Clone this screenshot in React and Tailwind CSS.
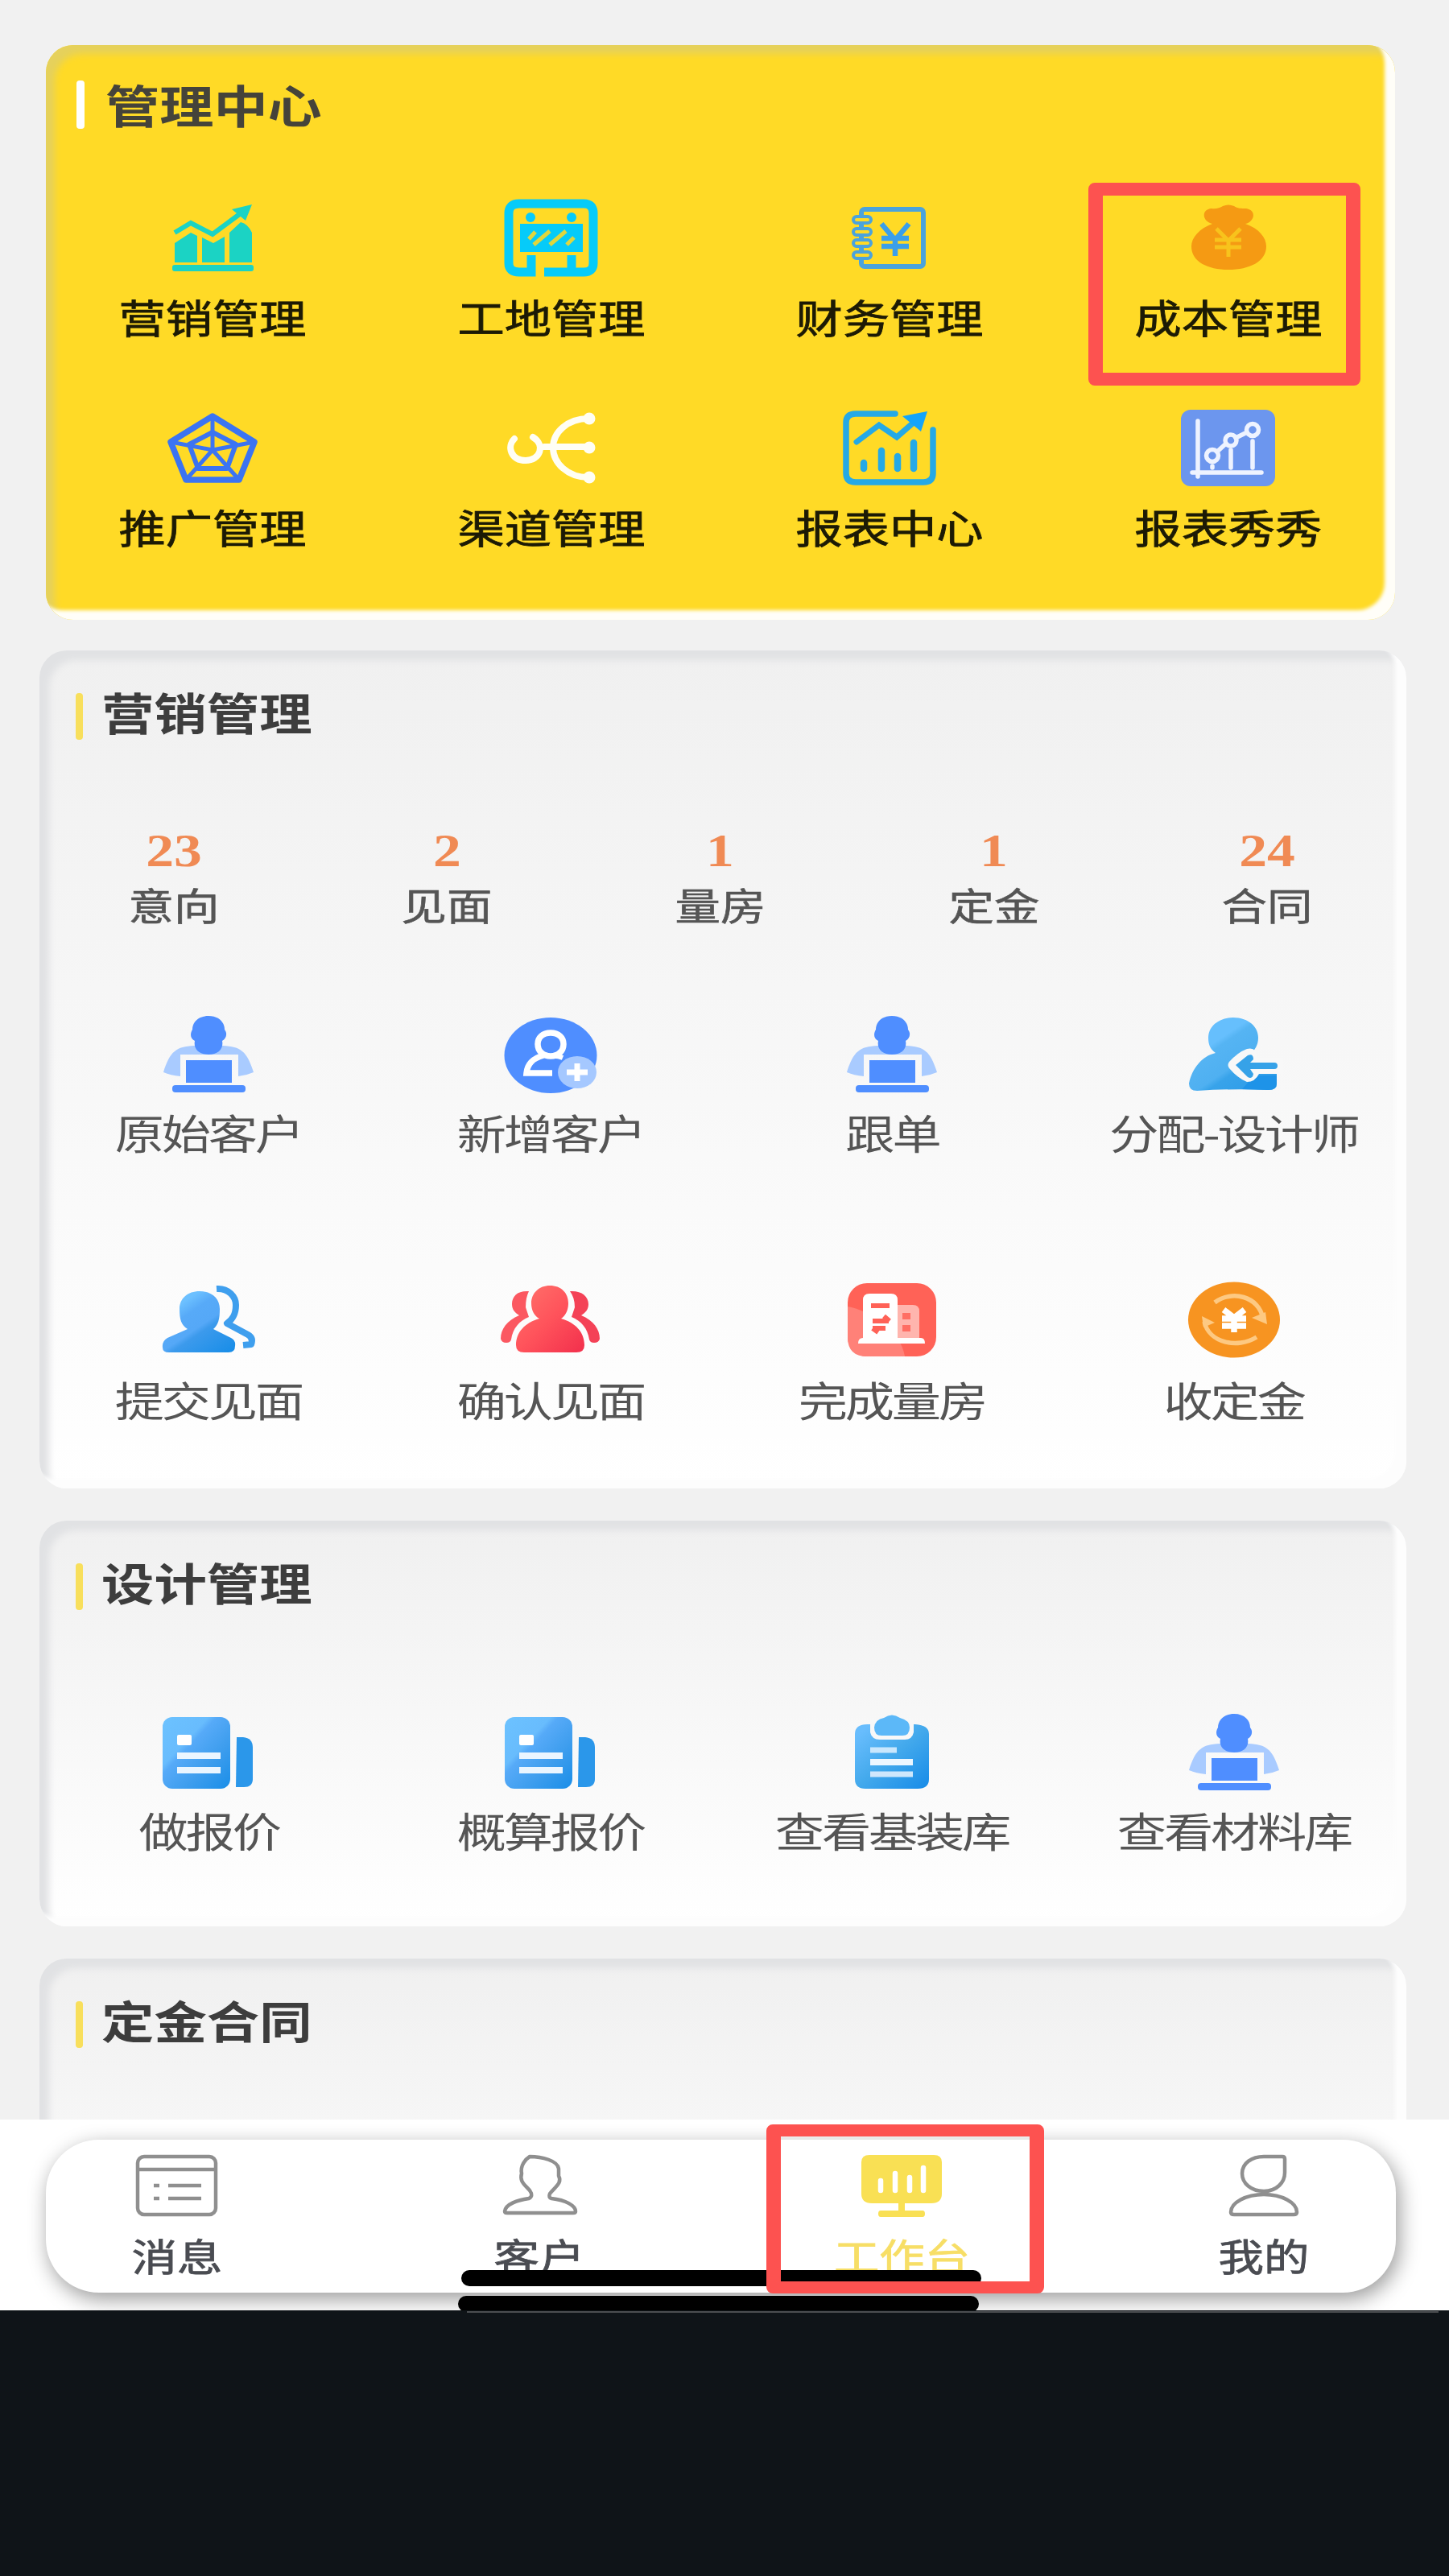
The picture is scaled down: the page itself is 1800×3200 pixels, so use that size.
import clsx from "clsx";

function Svg({ children, h = 96 }) {
  return (
    <svg
      width="120"
      height={h}
      viewBox={`0 0 120 ${h}`}
      fill="none"
      className="shrink-0 overflow-visible"
    >
      {children}
    </svg>
  );
}

function GrowthIcon() {
  return (
    <Svg>
      <g fill="#1bd3c4">
        <path d="M13 54 33 41 41 45V78H13ZM47 47 61 54 75 46V78H47ZM81 41 95 28Q104 30 109 41V78H81Z" />
        <rect x="10" y="81" width="101" height="8" rx="3" />
        <path d="M109 6 84 12 101 26Z" />
      </g>
      <path d="M13 41 33 29 60 43 95 17" stroke="#1bd3c4" strokeWidth="6" />
    </Svg>
  );
}

function SiteIcon() {
  return (
    <Svg>
      <path
        d="M35 69V90H20Q7 90 7 79V17Q7 5 20 5H100Q112 5 112 17V79Q112 90 100 90H51M85 69V89"
        stroke="#06cbf9"
        strokeWidth="11"
      />
      <g fill="#06cbf9">
        <circle cx="34" cy="22" r="6" />
        <circle cx="85" cy="22" r="6" />
        <rect x="21" y="30" width="78" height="35" />
      </g>
      <path
        d="M32 49 40 40M38 56 58 39M58 56 78 39M79 56 88 47"
        stroke="#dfd63e"
        strokeWidth="5"
      />
    </Svg>
  );
}

function FinanceIcon() {
  return (
    <Svg>
      <rect x="25" y="12" width="77" height="71" rx="4" stroke="#4ba3dc" strokeWidth="6" />
      {[25, 40, 54, 69].map((y) => (
        <rect key={y} x="15" y={y - 4} width="22" height="8" rx="4" fill="#ffda26" stroke="#4ba3dc" strokeWidth="4" />
      ))}
      <path d="M50 30 67 50 84 30M67 50V70M50 48H84M50 58H84" stroke="#3a9fea" strokeWidth="6.5" />
    </Svg>
  );
}

function BagIcon() {
  return (
    <Svg>
      <path
        d="M40 30C27 27 26 12 39 11C44 12 50 10 53 8Q60 5 67 8C71 11 76 11 82 11C95 13 93 27 81 30C98 36 107 47 107 58C107 77 86 87 60 87C34 87 14 77 14 58C14 47 24 36 40 30Z"
        fill="#f59a13"
      />
      <path d="M45 36 60 51 75 36M60 51V71M43 50H76M43 59H76" stroke="#f8c31c" strokeWidth="5" />
    </Svg>
  );
}

function RadarIcon() {
  return (
    <Svg>
      <g stroke="#3b74f2" strokeLinejoin="round">
        <path d="M60 8 112 40 93 87H27L8 40Z" strokeWidth="7.5" />
        <path d="M60 28 89 43 78 73H42L31 43Z" strokeWidth="6" />
        <path d="M60 8V50M112 40 60 50 93 87M27 87 60 50 8 40" strokeWidth="5" />
      </g>
    </Svg>
  );
}

function ChannelIcon() {
  return (
    <Svg>
      <path
        d="M14 36C4 46 10 63 28 63C46 63 53 44 37 34M51 46H106M106 11C80 11 62 28 62 47C62 66 80 84 106 84"
        stroke="#fffef4"
        strokeWidth="8"
        strokeLinecap="round"
      />
      <g fill="#fffef4">
        <circle cx="107" cy="11" r="7.5" />
        <circle cx="107" cy="47" r="7.5" />
        <circle cx="107" cy="84" r="7.5" />
      </g>
    </Svg>
  );
}

function ReportIcon() {
  return (
    <Svg>
      <g stroke="#25a9e6" strokeLinecap="round">
        <path d="M67 5H18Q6 5 6 16V79Q6 90 18 90H102Q114 90 114 79V25" strokeWidth="7.5" />
        <path d="M19 40 47 19 69 34 92 14" strokeWidth="7" />
        <path d="M28 66V73M50 51V73M70 58V73M90 41V73" strokeWidth="8.5" />
      </g>
      <path d="M107 2 76 8 99 27Z" fill="#14a4fb" />
    </Svg>
  );
}

function ScatterIcon() {
  return (
    <Svg>
      <rect x="1" y="0" width="117" height="95" rx="12" fill="#6c96ee" />
      <g stroke="#eef3ff" strokeWidth="5.5" strokeLinecap="round">
        <path d="M22 14V83M15 78H101M46 52 57 42M69 35 83 28" />
        <circle cx="40" cy="57" r="7.5" />
        <circle cx="63" cy="38" r="7" />
        <circle cx="90" cy="25" r="7.5" />
        <path d="M40 70V72M63 50V72M90 39V72" />
      </g>
    </Svg>
  );
}

function WorkerIcon() {
  return (
    <Svg h={98}>
      <path d="M42 39C20 40 12 46 4 72Q13 76 25 77V50H97V77Q107 76 116 72C108 46 100 40 78 39Z" fill="#a9cbff" />
      <path
        d="M60 2C73 2 80 10 80 19C84 24 82 30 77 33C79 43 72 50 60 50C48 50 41 43 43 33C37 30 37 24 40 19C40 10 47 2 60 2Z"
        fill="#4f8eff"
      />
      <rect x="32" y="57" width="57" height="28" fill="#4f8eff" />
      <rect x="15" y="88" width="91" height="9" rx="4" fill="#4f8eff" />
    </Svg>
  );
}

function AddUserIcon() {
  return (
    <Svg h={98}>
      <ellipse cx="60" cy="51" rx="57.5" ry="47" fill="#4f8eff" />
      <path
        d="M60 23C70 23 76 29 76 37C76 46 69 52 60 52C51 52 44 46 44 37C44 29 50 23 60 23ZM51 51C37 55 31 62 30 73H62"
        stroke="#fff"
        strokeWidth="7.5"
      />
      <path d="M60 52Q68 51 75 54" stroke="#fff" strokeWidth="6" />
      <ellipse cx="93" cy="72" rx="24" ry="20" fill="#a5c8ff" />
      <path d="M80 72H106M93 61V83" stroke="#fff" strokeWidth="7" />
    </Svg>
  );
}

function AssignIcon() {
  return (
    <Svg h={98}>
      <defs>
        <linearGradient id="assign" x1="0.1" y1="0" x2="0.9" y2="1">
          <stop offset="0.3" stopColor="#66bffd" />
          <stop offset="0.36" stopColor="#55b4f3" />
          <stop offset="0.6" stopColor="#4fb0f1" />
          <stop offset="0.66" stopColor="#38a3ea" />
          <stop offset="1" stopColor="#2b9be8" />
        </linearGradient>
      </defs>
      <path
        d="M59 4C77 4 90 15 90 29C90 38 86 45 79 50L113 74V86Q113 94 103 94Q60 92 14 95Q4 95 4 86C8 67 20 52 37 48C30 43 28 37 28 29C28 15 41 4 59 4Z"
        fill="url(#assign)"
      />
      <path d="M85 76H113V86Q113 94 103 94L70 93Z" fill="#1e93e8" />
      <path
        d="M54 59Q65 47 76 43Q88 40 89 54H121V74H91Q86 84 76 84Q64 79 54 67Q51 63 54 59Z"
        fill="#f8f8f8"
      />
      <path
        d="M62 63 77 51Q84 48 84 56L80 60H110Q114 60 114 64Q114 68 110 68H80L84 74Q83 81 77 78Z"
        fill="#36a2e8"
      />
    </Svg>
  );
}

function SubmitIcon() {
  return (
    <Svg h={98}>
      <defs>
        <linearGradient id="submit" x1="0.1" y1="0" x2="0.9" y2="1">
          <stop offset="0.2" stopColor="#6cc0ff" />
          <stop offset="0.35" stopColor="#57aaf8" />
          <stop offset="0.55" stopColor="#55a8f7" />
          <stop offset="0.62" stopColor="#3c9aec" />
          <stop offset="1" stopColor="#1a8ee8" />
        </linearGradient>
      </defs>
      <path
        d="M49 12C64 12 74 21 74 34C74 47 72 54 66 59L88 70Q94 73 93 80Q93 88 85 88H11Q3 88 3 82Q2 74 9 70L34 59C26 54 24 47 24 34C24 21 34 12 49 12Z"
        fill="url(#submit)"
      />
      <path
        d="M70 9C85 8 94 19 94 29C94 41 90 47 83 52L109 66Q116 70 113 78L103 79"
        stroke="#3f9fee"
        strokeWidth="8"
        strokeLinejoin="round"
      />
    </Svg>
  );
}

function ConfirmIcon() {
  return (
    <Svg h={98}>
      <defs>
        <linearGradient id="confirm" x1="0" y1="0" x2="1" y2="1">
          <stop offset="0" stopColor="#ff746c" />
          <stop offset="0.5" stopColor="#ff535b" />
          <stop offset="1" stopColor="#f22f4c" />
        </linearGradient>
      </defs>
      <path d="M33 12C19 11 12 18 12 28C12 35 16 39 21 42C6 48 -2 59 -2 71Q-1 76 5 76Q10 76 11 72C13 58 21 49 33 44L29 32Q29 20 33 12Z" fill="#fb5861" />
      <path d="M84 12C98 11 107 18 107 28C107 35 103 39 98 42C113 48 121 59 121 71Q120 76 114 76Q109 76 108 72C106 58 98 49 86 44L90 32Q90 20 84 12Z" fill="#f44257" />
      <path
        d="M59 5C73 5 82 14 82 27C82 36 78 43 73 46C91 51 102 63 102 79Q102 88 92 88H27Q17 88 17 79C17 63 28 51 46 46C40 43 36 36 36 27C36 14 46 5 59 5Z"
        fill="url(#confirm)"
      />
    </Svg>
  );
}

function BuildingIcon() {
  return (
    <Svg h={98}>
      <rect x="5" y="2" width="110" height="91" rx="24" fill="#ff6257" />
      <path d="M5 31C30 35 71 60 76 93H29Q5 93 5 69Z" fill="#ff8178" />
      <path d="M66 29H86Q94 29 94 37V71H66Z" fill="#ffb5ae" />
      <path d="M32 15H59Q67 15 67 23V70H96Q101 70 101 77H18Q18 70 24 70V23Q24 15 32 15Z" fill="#fff" />
      <path d="M34 30H57M36 49H56M36 58H52M50 43 57 49M36 58 43 63" stroke="#ff6257" strokeWidth="6" />
      <path d="M73 43H83M73 58H83" stroke="#ff6e64" strokeWidth="8" />
    </Svg>
  );
}

function DepositIcon() {
  return (
    <Svg h={98}>
      <ellipse cx="60" cy="47.5" rx="57" ry="47" fill="#f79421" />
      <path d="M36 26C57 10 91 18 96 46M88 69C64 84 29 76 23 50" stroke="#fdc982" strokeWidth="5.5" />
      <path d="M82 45 101 53 99 38ZM20 43 36 51 22 57Z" fill="#fdc982" />
      <path d="M47 35 60 45 73 35M60 44V63M45 46H75M45 55H75" stroke="#fff" strokeWidth="7.5" />
    </Svg>
  );
}

function QuoteIcon() {
  return (
    <Svg h={98}>
      <defs>
        <linearGradient id="quote" x1="0" y1="0" x2="1" y2="1">
          <stop offset="0" stopColor="#6cc2ff" />
          <stop offset="0.34" stopColor="#68bcfd" />
          <stop offset="0.4" stopColor="#56aaf8" />
          <stop offset="0.65" stopColor="#3f9eee" />
          <stop offset="1" stopColor="#1a8ee8" />
        </linearGradient>
      </defs>
      <rect x="3" y="6" width="84" height="89" rx="12" fill="url(#quote)" />
      <path d="M95 31H103Q115 32 115 44V83Q115 93 104 93H94Z" fill="#2b97ea" />
      <rect x="21" y="28" width="18" height="13" rx="2" fill="#fff" />
      <path d="M21 54H75M21 72H75" stroke="#eaf5ff" strokeWidth="8" />
    </Svg>
  );
}

function ClipboardIcon() {
  return (
    <Svg h={98}>
      <defs>
        <linearGradient id="clip" x1="0" y1="0" x2="1" y2="1">
          <stop offset="0.1" stopColor="#68bdfd" />
          <stop offset="0.5" stopColor="#43a9ec" />
          <stop offset="1" stopColor="#178be8" />
        </linearGradient>
      </defs>
      <path d="M32 15Q14 14 14 27V83Q14 95 27 95H92Q106 95 106 83V27Q106 16 89 15Z" fill="url(#clip)" />
      <path d="M33 10H87V25Q85 34 76 34H45Q35 34 33 25Z" fill="#f8f8f8" />
      <path d="M50 7Q60 0 70 7Q82 10 82 19Q82 29 73 29H47Q38 29 38 19Q39 9 50 7Z" fill="#5cb8f8" />
      <path d="M33 47H66" stroke="#c9e7fd" strokeWidth="7" />
      <path d="M33 62H86" stroke="#edf7ff" strokeWidth="8" />
      <path d="M33 77H86" stroke="#cfe7fc" strokeWidth="7" />
    </Svg>
  );
}

function MessageIcon() {
  return (
    <Svg h={80}>
      <g stroke="#8f8f8f" strokeWidth="4.5">
        <rect x="11" y="3" width="97" height="72" rx="8" />
        <path d="M11 19H108M49 39H90M49 55H90M31 39H38M31 55H38" />
      </g>
    </Svg>
  );
}

function CustomerIcon() {
  return (
    <Svg h={80}>
      <path
        d="M48 3C63 3 83 8 84 18V27C89 36 79 41 73 49Q71 54 75 55C93 57 105 64 105 71Q105 73 102 73H20Q17 73 17 71C18 62 33 57 47 55Q53 52 48 45C42 38 35 34 38 24C36 14 43 6 48 3Z"
        stroke="#8f8f8f"
        strokeWidth="4.5"
        strokeLinejoin="round"
      />
    </Svg>
  );
}

function WorkbenchIcon() {
  return (
    <Svg h={80}>
      <path
        d="M20 1H100Q110 1 110 10V49Q110 61 97 61H64V70H86Q89 70 89 74Q89 78 86 78H34Q31 78 31 74Q31 70 34 70H56V61H23Q10 61 10 49V10Q10 1 20 1Z"
        fill="#f9e054"
      />
      <path d="M34 33V45M52 24V45M70 29V45M87 17V45" stroke="#fff" strokeWidth="6.5" strokeLinecap="round" />
    </Svg>
  );
}

function MineIcon() {
  return (
    <Svg h={80}>
      <g stroke="#8f8f8f" strokeWidth="4.5">
        <path d="M60 3H83Q86 3 86 6V23C86 35 76 46 60 46C44 46 33 36 33 24C33 11 45 3 60 3Z" />
        <path d="M60 50C82 50 101 60 101 72Q101 75 97 75H23Q19 75 19 72C19 60 38 50 60 50Z" />
      </g>
    </Svg>
  );
}

const CENTER = [
  { name: "营销管理", icon: GrowthIcon },
  { name: "工地管理", icon: SiteIcon },
  { name: "财务管理", icon: FinanceIcon },
  { name: "成本管理", icon: BagIcon, marked: true },
  { name: "推广管理", icon: RadarIcon },
  { name: "渠道管理", icon: ChannelIcon },
  { name: "报表中心", icon: ReportIcon },
  { name: "报表秀秀", icon: ScatterIcon },
];

const STATS = [
  { name: "意向", value: 23 },
  { name: "见面", value: 2 },
  { name: "量房", value: 1 },
  { name: "定金", value: 1 },
  { name: "合同", value: 24 },
];

const MARKETING = [
  { name: "原始客户", icon: WorkerIcon },
  { name: "新增客户", icon: AddUserIcon },
  { name: "跟单", icon: WorkerIcon },
  { name: "分配-设计师", icon: AssignIcon },
  { name: "提交见面", icon: SubmitIcon },
  { name: "确认见面", icon: ConfirmIcon },
  { name: "完成量房", icon: BuildingIcon },
  { name: "收定金", icon: DepositIcon },
];

const DESIGN = [
  { name: "做报价", icon: QuoteIcon },
  { name: "概算报价", icon: QuoteIcon },
  { name: "查看基装库", icon: ClipboardIcon },
  { name: "查看材料库", icon: WorkerIcon },
];

const TABS = [
  { name: "消息", icon: MessageIcon },
  { name: "客户", icon: CustomerIcon },
  { name: "工作台", icon: WorkbenchIcon, active: true },
  { name: "我的", icon: MineIcon },
];

function Card({ title, className, children }) {
  return (
    <section
      className={clsx(
        "mr-[53px] ml-[49px] shrink-0 rounded-[34px] pt-[53px]",
        "bg-linear-to-b from-[#f0f0f0] to-white",
        "shadow-[inset_-14px_-12px_5px_#fdfdfd,inset_12px_12px_9px_#e1e2e4]",
        className,
      )}
    >
      <div className="flex h-[58px] items-start">
        <span className="ml-[45px] h-[58px] w-[9px] rounded-sm bg-[#f8df5c]" />
        <h2 className="ml-[23px] origin-left scale-x-[1.2] text-[54.5px] leading-[46px] font-bold text-[#3d3d3d]">
          {title}
        </h2>
      </div>
      {children}
    </section>
  );
}

function IconGrid({ items, className }) {
  return (
    <div className={clsx("mr-[2px] -ml-[2px] grid grid-cols-4 gap-y-[158px]", className)}>
      {items.map(({ name, icon: Icon }) => (
        <div key={name} className="flex flex-col items-center gap-5">
          <Icon />
          <span className="scale-x-[1.2] text-[51px] leading-[56px] tracking-[-2.6px] whitespace-nowrap text-[#555]">
            {name}
          </span>
        </div>
      ))}
    </div>
  );
}

export default function App() {
  return (
    <div className="flex h-[3200px] w-[1800px] flex-col overflow-hidden bg-[#0f1418] font-['Noto_Sans_CJK_SC',sans-serif]">
      <main className="flex h-[2633px] shrink-0 flex-col overflow-hidden bg-[#f1f1f1] pt-14">
        {/* Management center */}
        <section className="ml-[57px] h-[714px] w-[1676px] shrink-0 rounded-[34px] bg-[#ffda26] pt-11 shadow-[inset_-13px_-12px_4px_#fffef8,inset_11px_11px_8px_#e6d15c]">
          <div className="flex h-[60px] items-start">
            <span className="ml-[38px] h-[60px] w-[10px] rounded-sm bg-white" />
            <h2 className="ml-[26px] origin-left scale-x-[1.2] text-[56px] leading-[57px] font-bold text-[#45433a]">
              管理中心
            </h2>
          </div>
          <div className="-mx-[3px] mt-[88px] grid grid-cols-4 gap-y-[86px]">
            {CENTER.map(({ name, icon: Icon, marked }) => (
              <div key={name} className="relative flex flex-col items-center gap-[19px]">
                <Icon />
                <span className="scale-x-[1.2] text-[48.5px] leading-[60px] text-[#1c1a05] [-webkit-text-stroke:0.8px]">
                  {name}
                </span>
                {marked && (
                  <div className="absolute -top-[21px] left-[36px] h-[252px] w-[338px] rounded-lg border-x-[18px] border-y-[16px] border-[#fd5250]" />
                )}
              </div>
            ))}
          </div>
        </section>

        <Card title="营销管理" className="mt-[38px] h-[1041px]">
          <div className="mt-[108px] mr-[3px] -ml-[3px] grid grid-cols-5">
            {STATS.map((stat) => (
              <div key={stat.name} className="flex flex-col items-center gap-2">
                <span className="scale-x-[1.2] font-['Liberation_Serif',serif] text-[58px] leading-[60px] font-bold text-[#f08a54]">
                  {stat.value}
                </span>
                <span className="scale-x-[1.2] text-[47px] leading-[56px] text-[#555] [-webkit-text-stroke:0.6px]">
                  {stat.name}
                </span>
              </div>
            ))}
          </div>
          <IconGrid items={MARKETING} className="mt-[109px]" />
        </Card>

        <Card title="设计管理" className="mt-10 h-[504px]">
          <IconGrid items={DESIGN} className="mt-[127px]" />
        </Card>

        <Card title="定金合同" className="mt-10 h-[504px]" />
      </main>

      {/* Bottom tab bar */}
      <footer className="relative h-[237px] shrink-0 overflow-hidden bg-white pt-[25px]">
        <div className="mr-[66px] ml-[57px] h-[190px] rounded-[66px] bg-white shadow-[4px_8px_26px_rgba(0,0,0,0.4)]">
          <nav className="-ml-[62px] grid w-[1800px] grid-cols-4 pt-[18px]">
            {TABS.map(({ name, icon: Icon, active }) => (
              <div key={name} className="flex flex-col items-center gap-[17px]">
                <Icon />
                <span
                  className={clsx(
                    "scale-x-[1.2] text-[47px] leading-[55px] [-webkit-text-stroke:0.8px]",
                    active ? "text-[#f7de66]" : "text-[#4a4c52]",
                  )}
                >
                  {name}
                </span>
              </div>
            ))}
          </nav>
        </div>
        {/* Home indicators */}
        <div className="absolute top-[187px] left-[573px] h-5 w-[646px] rounded-full bg-black" />
        <div className="absolute top-[219px] left-[569px] h-5 w-[647px] rounded-full bg-black" />
        <div className="absolute top-[6px] left-[952px] h-[210px] w-[345px] rounded-lg border-x-[18px] border-y-[15px] border-[#fd5250]" />
      </footer>
      <div className="mt-px ml-[580px] h-[2px] w-[1207px] bg-[#4b4e51]" />
    </div>
  );
}
